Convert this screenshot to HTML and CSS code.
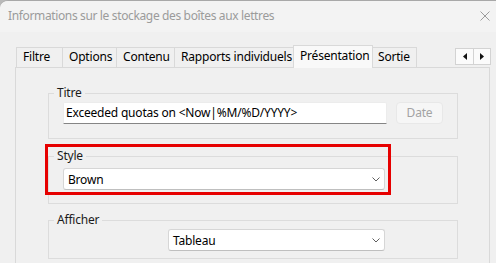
FILE: index.html
```html
<!DOCTYPE html>
<html lang="fr">
<head>
    <meta charset="UTF-8">
    <title>Informations sur le stockage des boîtes aux lettres</title>
    <link rel="stylesheet" href="styles.css">
</head>
<body>
    <div class="window">
        <div class="titlebar">
            <span class="title">Informations sur le stockage des boîtes aux lettres</span>
            <svg class="close" width="10" height="10" viewBox="0 0 10 10">
                <path d="M0.5 0.5 L9.5 9.5 M9.5 0.5 L0.5 9.5" stroke="#9b9b9b" stroke-width="1" fill="none"/>
            </svg>
        </div>

        <div class="tabstrip">
            <div class="tabs">
                <div class="tab tab-filtre">Filtre</div>
                <div class="tab tab-options">Options</div>
                <div class="tab tab-contenu">Contenu</div>
                <div class="tab tab-rapports">Rapports individuels</div>
                <div class="tab tab-presentation selected">Présentation</div>
                <div class="tab tab-sortie">Sortie</div>
            </div>
            <div class="scroller">
                <div class="scroll-btn">
                    <svg width="4" height="7" viewBox="0 0 4 7"><polygon points="4,0 4,7 0,3.5" fill="#111"/></svg>
                </div>
                <div class="scroll-btn">
                    <svg width="4" height="7" viewBox="0 0 4 7"><polygon points="0,0 0,7 4,3.5" fill="#111"/></svg>
                </div>
            </div>
        </div>

        <div class="panel">
            <fieldset class="group group-titre">
                <legend>Titre</legend>
                <div class="row">
                    <div class="textbox">Exceeded quotas on &lt;Now|%M/%D/YYYY&gt;</div>
                    <div class="btn disabled">Date</div>
                </div>
            </fieldset>

            <fieldset class="group group-style">
                <legend>Style</legend>
                <div class="combo combo-style">
                    <span>Brown</span>
                    <svg class="chevron" width="8" height="5" viewBox="0 0 8 5">
                        <path d="M0.5 0.5 L4 4 L7.5 0.5" stroke="#5f5f5f" stroke-width="1" fill="none"/>
                    </svg>
                </div>
            </fieldset>

            <fieldset class="group group-afficher">
                <legend>Afficher</legend>
                <div class="combo combo-afficher">
                    <span>Tableau</span>
                    <svg class="chevron" width="8" height="5" viewBox="0 0 8 5">
                        <path d="M0.5 0.5 L4 4 L7.5 0.5" stroke="#5f5f5f" stroke-width="1" fill="none"/>
                    </svg>
                </div>
            </fieldset>

            <!-- annotation frame drawn over the Style group -->
            <div class="highlight"></div>
        </div>
    </div>
</body>
</html>
```

FILE: styles.css
```css
* {
    margin: 0;
    padding: 0;
    box-sizing: border-box;
}

html, body {
    width: 496px;
    height: 263px;
    overflow: hidden;
    background: #b9b9b9;
}

body {
    font-family: "Noto Sans", "Liberation Sans", sans-serif;
    font-size: 12px;
    letter-spacing: -0.2px;
    color: #000;
}

.window {
    width: 496px;
    height: 263px;
    background: #f0f0f0;
    border-top: 1px solid #a8a8a8;
    border-top-left-radius: 8px;
    overflow: hidden;
}

.titlebar {
    height: 31px;
    display: flex;
    align-items: center;
    justify-content: space-between;
    padding: 0 6px 2px 8px;
    background: #f3f3f3;
}

.title {
    color: #9b9b9b;
    line-height: 16px;
    letter-spacing: -0.36px;
}

/* tab strip */
.tabstrip {
    height: 35px;
    display: flex;
    padding-left: 16px;
    position: relative;
    z-index: 1;
}

.tabs {
    display: flex;
    align-items: flex-end;
}

.tab {
    height: 20px;
    line-height: 18px;
    padding-left: 6px;
    border: 1px solid #d9d9d9;
    border-bottom: none;
    border-left: none;
    background: #f0f0f0;
    white-space: nowrap;
}

.tab-filtre { width: 47px; border-left: 1px solid #d9d9d9; }
.tab-options { width: 54px; }
.tab-contenu { width: 58px; }
.tab-rapports { width: 119px; }
.tab-presentation { width: 80px; }
.tab-sortie { width: 44px; padding-left: 5px; }

.tab.selected {
    height: 23px;
    margin-bottom: -1px;
    line-height: 18px;
    padding-top: 1px;
    border-left: 1px solid #d9d9d9;
    margin-left: -1px;
    background: #f9f9f9;
}

.scroller {
    display: flex;
    margin-left: auto;
    margin-right: 5px;
    margin-top: 16px;
    height: 17px;
    border: 1px solid #d3d3d3;
    background: #fbfbfb;
}

.scroll-btn {
    width: 17px;
    display: flex;
    align-items: center;
    justify-content: center;
}

.scroll-btn + .scroll-btn {
    border-left: 1px solid #d3d3d3;
}

/* tab page */
.panel {
    position: relative;
    margin-left: 15px;
    width: 475px;
    height: 200px;
    border: 1px solid #d9d9d9;
    border-bottom: none;
    background: #f0f0f0;
    padding: 17px 0 0 32px;
}

.group {
    width: 410px;
    min-width: 0;
    border: 1px solid #dcdcdc;
    padding: 0 0 14px 5px;
}

.group legend {
    padding: 0 3px;
    line-height: 16px;
    color: #1b1b1b;
}

.group-titre .row,
.group-style .combo {
    margin-left: 9px;
}

.group-style {
    margin-top: 9px;
    padding-bottom: 13px;
}

.group-afficher {
    margin-top: 8px;
    padding-bottom: 7px;
}

.row {
    display: flex;
    gap: 9px;
    margin-top: 1px;
}

.textbox {
    width: 324px;
    height: 22px;
    line-height: 20px;
    padding-left: 2px;
    background: #fff;
    border: 1px solid #ececec;
    border-bottom: 1px solid #858585;
    border-radius: 2px 2px 0 0;
    white-space: nowrap;
    overflow: hidden;
}

.btn {
    width: 47px;
    height: 22px;
    line-height: 20px;
    text-align: center;
    border: 1px solid #e8e8e8;
    border-radius: 4px;
    background: #f6f6f6;
}

.btn.disabled {
    color: #a3a3a3;
}

.combo {
    height: 22px;
    display: flex;
    align-items: center;
    justify-content: space-between;
    padding: 0 4px;
    background: #fff;
    border: 1px solid #d6d6d6;
    border-bottom-color: #bfbfbf;
    border-radius: 3px;
}

.combo-style {
    width: 322px;
    margin-top: 4px;
}

.combo-afficher {
    width: 217px;
    margin-top: 1px;
    margin-left: 114px;
}

.chevron {
    margin-top: 1px;
}

.highlight {
    position: absolute;
    left: 29px;
    top: 76px;
    width: 346px;
    height: 51px;
    border: 3px solid #e60000;
    pointer-events: none;
}
```
